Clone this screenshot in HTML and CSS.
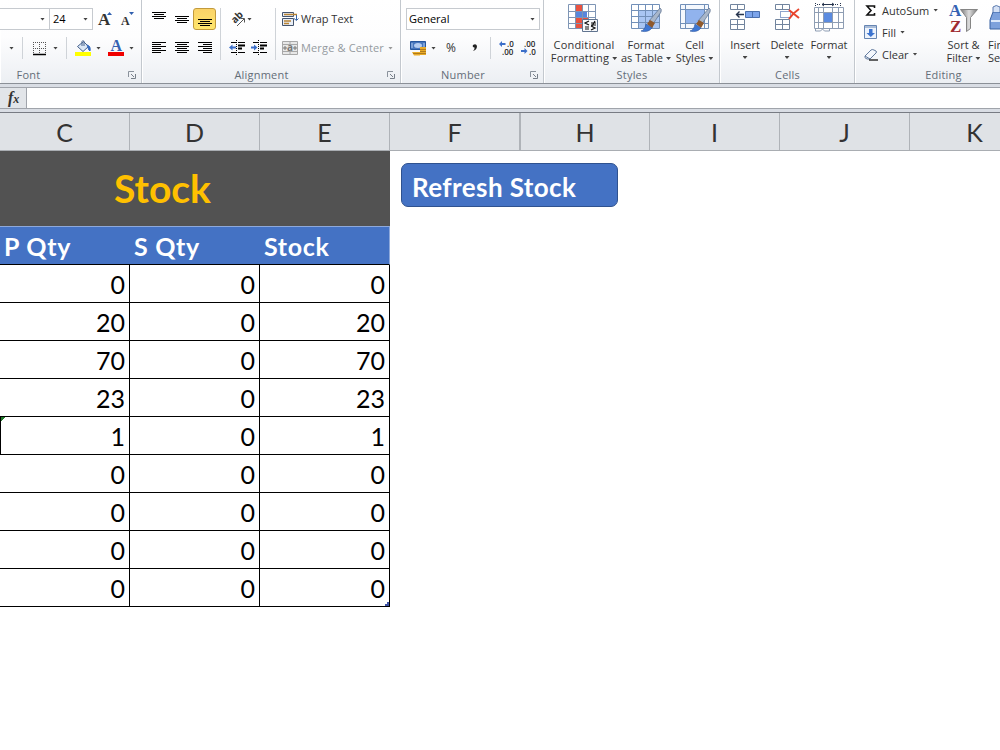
FILE: index.html
```html
<!DOCTYPE html>
<html lang="en">
<head>
  <meta charset="UTF-8">
  <meta name="viewport" content="width=device-width, initial-scale=1.0">
  <title>Stock</title>
  <link rel="stylesheet" href="styles.css">
</head>
<body>
  <!-- Ribbon -->
  <div class="ribbon">
    <div class="group font-group">
      <div class="row">
        <div class="combo font-name"><i class="caret"></i></div>
        <div class="combo font-size"><span>24</span><i class="caret"></i></div>
        <svg class="grow-font" width="16" height="16"><text x="0" y="14" class="serif" font-size="17">A</text><path d="M9 4l2.500-3 2.500 3z" fill="#2f5fae"/></svg>
        <svg class="shrink-font" width="14" height="16"><text x="0" y="14" class="serif" font-size="12">A</text><path d="M8 1h5l-2.500 3z" fill="#2f5fae"/></svg>
      </div>
      <div class="row font-bottom">
        <i class="caret"></i>
        <i class="sep"></i>
        <svg width="16" height="16"><path d="M1.500 2v11M7.500 2v11M13.500 2v11M1 2.500h13M1 8.500h13" stroke="#555" stroke-dasharray="1 1"/><path d="M1 14.500h13" stroke="#000" stroke-width="1.500"/></svg>
        <i class="caret"></i>
        <i class="sep"></i>
        <svg width="17" height="18"><path d="M2.500 7.500l6-5 5 5-5.500 5z" fill="#dce8f6" stroke="#44608c"/><path d="M7 7V2.500q1-2 2 0V7" fill="none" stroke="#44608c"/><path d="M12 6q4 1 3 6-2-1-2-4z" fill="#3267bd" stroke="#3267bd"/><path d="M0 13h16v4H0z" fill="#ff0"/></svg>
        <i class="caret"></i>
        <svg width="16" height="18"><text x="2.500" y="12" class="serif letter-blue" font-size="16">A</text><path d="M0 13h16v4H0z" fill="#f00000"/></svg>
        <i class="caret"></i>
      </div>
      <div class="label">Font</div>
      <svg class="launcher" width="8" height="8"><use href="#launch"/></svg>
    </div>

    <div class="group align-group">
      <div class="align-body">
        <div class="aligns">
          <svg width="14" height="14"><path d="M0 .5h14M2 2.500h10M0 4.500h14M2 6.500h10" class="ink"/></svg>
          <svg width="14" height="14"><path d="M0 4.500h14M2 6.500h10M0 8.500h14M2 10.500h10" class="ink"/></svg>
          <span class="pressed"><svg width="14" height="14"><path d="M0 7.500h14M2 9.500h10M0 11.500h14M2 13.500h10" class="ink"/></svg></span>
          <svg width="14" height="14"><path d="M0 1.500h14M0 3.500h9M0 5.500h14M0 7.500h9M0 9.500h14M0 11.500h9" class="ink"/></svg>
          <svg width="14" height="14"><path d="M0 1.500h14M2 3.500h10M0 5.500h14M2 7.500h10M0 9.500h14M2 11.500h10" class="ink"/></svg>
          <svg width="14" height="14"><path d="M0 1.500h14M5 3.500h9M0 5.500h14M5 7.500h9M0 9.500h14M5 11.500h9" class="ink"/></svg>
        </div>
        <i class="sep tall"></i>
        <div class="indents">
          <div class="row">
            <svg width="17" height="16"><text x="0" y="0" class="small-bold" transform="translate(6 13) rotate(-45)">ab</text><path d="M8 15l7-7M11.500 7.500h4v4" fill="none" stroke="#555"/></svg>
            <i class="caret"></i>
          </div>
          <div class="row">
            <svg width="17" height="16"><path d="M2 2.500h5M9 2.500h7M9 5.500h7M9 8.500h4M2 12.500h5M9 12.500h7" class="ink"/><path d="M9 5.500h7M9 8.500h4" class="ink thick"/><path d="M7.500 0v16" stroke="#000" stroke-dasharray="1 1"/><path d="M0 7.500l3.500-3v2H7v2H3.500v2z" fill="#3c6fc9"/></svg>
            <svg width="17" height="16"><path d="M2 2.500h5M9 2.500h7M9 5.500h7M9 8.500h4M2 12.500h5M9 12.500h7" class="ink"/><path d="M9 5.500h7M9 8.500h4" class="ink thick"/><path d="M7.500 0v16" stroke="#000" stroke-dasharray="1 1"/><path d="M6.500 7.500l-3.500-3v2H0v2h3v2z" fill="#3c6fc9"/></svg>
          </div>
        </div>
        <i class="sep tall"></i>
        <div class="wraps">
          <div class="row">
            <svg width="17" height="16"><path d="M.5 1.500h11v4H.5zM.5 7.500h11v7H.5z" fill="#e8edf5" stroke="#44546e"/><path d="M2 3.500h13M2 10h7M2 12.500h5" stroke="#b98435" stroke-width="1.400"/><path d="M14.500 4v5M12 7.500l2.500 2 2-2" fill="none" stroke="#3564a8"/></svg>
            <span class="wrap-text">Wrap Text</span>
          </div>
          <div class="row disabled">
            <svg width="16" height="16"><path d="M.5 1.500h15v13H.5zM0 4.500h16M0 11.500h16M8 1v3M8 12v3" fill="#e8e8e8" stroke="#a8a8a8"/><path d="M1 8h4M11 8h4M3 6v4M13 6v4" stroke="#777"/><text x="5" y="11" class="small-bold faded">a</text></svg>
            <span class="merge-text">Merge &amp; Center</span><i class="caret"></i>
          </div>
        </div>
      </div>
      <div class="label">Alignment</div>
      <svg class="launcher" width="8" height="8"><use href="#launch"/></svg>
    </div>

    <div class="group number-group">
      <div class="row">
        <div class="combo number-format"><span>General</span><i class="caret"></i></div>
      </div>
      <div class="row number-bottom">
        <svg width="17" height="17"><path d="M.5 1.500h15v8H.5z" fill="#4776bd" stroke="#26569d"/><ellipse cx="8" cy="5.500" rx="4" ry="2.500" fill="#b5cdf0"/><path d="M2 3v5M14 3v5" stroke="#b5cdf0"/><path d="M10 7h6v8h-6zM2 12h8v3.500H4z" fill="#e9ab28"/><path d="M10 9.500h6M10 11.500h6M10 13.500h6M3 13.500h7" stroke="#8a5a10" stroke-width=".6"/></svg>
        <i class="caret"></i>
        <span class="percent">%</span>
        <svg width="8" height="16"><path d="M1 5q3-2 4 1 0 4-4 5 2-2 1.500-3.500Q0 7 1 5z" fill="#222"/></svg>
        <i class="sep"></i>
        <svg width="17" height="16"><text x="8" y="6.500" class="decimal">.0</text><text x="3" y="14.500" class="decimal">.00</text><path d="M0 4l3-3v2h3.500v2H3v2z" fill="#3c6fc9"/></svg>
        <svg width="17" height="16"><text x="3" y="6.500" class="decimal">.00</text><text x="8" y="14.500" class="decimal">.0</text><path d="M6.500 11l-3-3v2H0v2h3.500v2z" fill="#3c6fc9"/></svg>
      </div>
      <div class="label">Number</div>
      <svg class="launcher" width="8" height="8"><use href="#launch"/></svg>
    </div>

    <div class="group styles-group">
      <div class="big-row">
        <div class="big conditional">
          <svg width="32" height="32"><path d="M1.500 2.500h27v23h-27z" fill="#fff"/><path d="M8 2h7v6H8zM8 14h13v6H8zM8 20h7v6H8z" fill="#e9523f"/><path d="M8 8h12v6H8z" fill="#5886dc"/><path d="M1.500 1.500h27v24h-27zM1 8.500h28M1 14.500h28M1 20.500h28M8.500 1v25M15.500 1v25M21.500 1v25" fill="none" stroke="#7e95b5"/><path d="M15.500 16.500h15v12h-15z" fill="#f7f9fc" stroke="#60738f"/><path d="M22 18l-4 2 4 2M18 24h4M18 26h4M24 20h5M24 22h5M28 18l-3 5M24 23l4 2-4 2" fill="none" stroke="#111" stroke-width="1.200"/></svg>
          <span>Conditional</span><span>Formatting<i class="caret"></i></span>
        </div>
        <div class="big as-table">
          <svg width="32" height="32"><path d="M1.500 1.500h28v24h-28z" fill="#fff"/><path d="M9 8h20v17H9z" fill="#a9c6f3"/><path d="M1.500 1.500h28v24h-28zM1 7.500h29M1 13.500h29M1 19.500h29M8.500 1v25M15.500 1v25M22.500 1v25" fill="none" stroke="#7290b9"/><use href="#brush"/></svg>
          <span>Format</span><span>as Table<i class="caret"></i></span>
        </div>
        <div class="big cell-styles">
          <svg width="32" height="32"><path d="M1.500 1.500h28v24h-28z" fill="#f5f8fd" stroke="#7290b9"/><path d="M6.500 6.500h19v14h-19z" fill="#91b3ed" stroke="#5d82bd"/><path d="M6.500 1v25M25.500 1v25M1 6.500h29M1 20.500h29" stroke="#7290b9"/><use href="#brush"/></svg>
          <span>Cell</span><span>Styles<i class="caret"></i></span>
        </div>
      </div>
      <div class="label">Styles</div>
    </div>

    <div class="group cells-group">
      <div class="big-row">
        <div class="big">
          <svg width="32" height="32"><path d="M1.500 1.500h14v5h-14zM8.500 1v6M1.500 16.500h14v10h-14zM8.500 16v11M1 21.500h15" fill="#fff" stroke="#71849e"/><path d="M16.500 8.500h14v6h-14zM23.500 8v7" fill="#7ca4eb" stroke="#4a6fad"/><path d="M8 11.500h7M10.500 8.500l-3 3 3 3" fill="none" stroke="#26344d" stroke-width="1.400"/></svg>
          <span>Insert</span><i class="caret"></i>
        </div>
        <div class="big">
          <svg width="32" height="32"><path d="M4.500 1.500h14v5h-14zM11.500 1v6M4.500 16.500h14v10h-14zM11.500 16v11M4 21.500h15" fill="#fff" stroke="#71849e"/><path d="M9.500 8.500h10v6h-10z" fill="#fff" stroke="#234b9b" stroke-dasharray="1 1"/><path d="M18 7l10 8M28 6q-6 4-10 10" fill="none" stroke="#e8452e" stroke-width="2"/></svg>
          <span>Delete</span><i class="caret"></i>
        </div>
        <div class="big">
          <svg width="32" height="32"><path d="M2.500 0v4M27.500 0v4M4 1.500h4M22 1.500h4" stroke="#26344d" stroke-dasharray="1 1"/><path d="M9 1.500h12M11 0l-2 1.500L11 3M19 0l2 1.500L19 3" fill="none" stroke="#26344d"/><path d="M1.500 5.500h28v21h-28z" fill="#fff"/><path d="M10.500 9.500h9v10h-9z" fill="#5b8be0"/><path d="M1.500 4.500h29v21h-29zM1 9.500h30M1 19.500h30M5.500 4v22M10.500 4v22M19.500 4v22M25.500 4v22M2.500 26v2h5l2-2 2 2h5v-2" fill="none" stroke="#8e9db3"/></svg>
          <span>Format</span><i class="caret"></i>
        </div>
      </div>
      <div class="label">Cells</div>
    </div>

    <div class="group editing-group">
      <div class="editing-body">
        <div class="edit-list">
          <div><svg width="14" height="16"><path d="M10.500 6V4H3l4 4.500L3 13h7.500v-2" fill="none" stroke="#111" stroke-width="1.600"/></svg><span>AutoSum</span><i class="caret"></i></div>
          <div><svg width="14" height="16"><path d="M.5 1.500h12v13H.5z" fill="#edf3fc" stroke="#6685b2"/><path d="M1 3h11" stroke="#6685b2"/><path d="M5 5h3.500v4h2.500L6.800 13 2.500 9H5z" fill="#3c74d0"/></svg><span>Fill</span><i class="caret"></i></div>
          <div><svg width="14" height="16"><path d="M1 10l6-6q1-1 3 0l2 1q1 1 0 2l-6 6H3q-3-1-2-3z" fill="#f4f7fc" stroke="#637b9e"/><path d="M1 10l5 3" stroke="#637b9e"/><path d="M5 14h9" stroke="#111" stroke-width="1.300"/></svg><span>Clear</span><i class="caret"></i></div>
        </div>
        <div class="big sort">
          <svg width="32" height="32"><path d="M12.500 6.500h17l-7 8v11l-4 3v-14z" fill="url(#steel)" stroke="#858585"/><text x="1" y="13" class="serif letter-blue" font-size="17">A</text><text x="2" y="29" class="serif letter-red" font-size="17">Z</text></svg>
          <span>Sort &amp;</span><span>Filter<i class="caret"></i></span>
        </div>
        <div class="big find">
          <svg width="32" height="32"><path d="M2 17l3-8h7l3 8v9H2z" fill="#7da1dc" stroke="#3b62a2"/><path d="M5 9V4q3-3 7 0v5" fill="#d6e2f6" stroke="#5c7bae"/><path d="M3 18h12" stroke="#dce8fa" stroke-width="2"/></svg>
          <span>Find &amp;</span><span>Select</span>
        </div>
      </div>
      <div class="label">Editing</div>
    </div>
  </div>

  <!-- Formula bar -->
  <div class="formula-bar">
    <div class="fx"><i>f</i><i class="x">x</i></div>
    <div class="formula-input"></div>
  </div>

  <!-- Sheet -->
  <div class="columns">
    <div>C</div><div>D</div><div>E</div><div class="before-hidden">F</div><div>H</div><div>I</div><div>J</div><div>K</div>
  </div>
  <div class="sheet">
    <table class="stock">
      <thead>
        <tr class="title"><th colspan="3">Stock</th></tr>
        <tr class="heads"><th>P Qty</th><th>S Qty</th><th>Stock</th></tr>
      </thead>
      <tbody>
        <tr><td>0</td><td>0</td><td>0</td></tr>
        <tr><td>20</td><td>0</td><td>20</td></tr>
        <tr><td>70</td><td>0</td><td>70</td></tr>
        <tr><td>23</td><td>0</td><td>23</td></tr>
        <tr><td class="selected-edge">1</td><td>0</td><td>1</td></tr>
        <tr><td>0</td><td>0</td><td>0</td></tr>
        <tr><td>0</td><td>0</td><td>0</td></tr>
        <tr><td>0</td><td>0</td><td>0</td></tr>
        <tr><td>0</td><td>0</td><td class="table-end">0</td></tr>
      </tbody>
    </table>
    <button type="button" class="refresh">Refresh Stock</button>
  </div>

  <!-- Shared shapes -->
  <svg class="defs" width="0" height="0">
    <defs>
      <linearGradient id="steel"><stop offset="0" stop-color="#777"/><stop offset=".5" stop-color="#ddd"/><stop offset="1" stop-color="#777"/></linearGradient>
      <g id="launch"><path d="M.5 6V.5H6" fill="none" stroke="#8a929c"/><path d="M3 3l3 3M7.500 3v4.500H3" fill="none" stroke="#777f89"/></g>
      <g id="brush"><path d="M30 5q2 1 1 4l-8 12-4-3z" fill="#a8b6ca" stroke="#5a6e8c" stroke-width=".7"/><path d="M20 17l5 3-3 5-5-4z" fill="#8f5a2e"/><path d="M16 21l6 4q-4 5-11 3 4-1 5-7z" fill="#3f77d2" stroke="#2b559f" stroke-width=".6"/></g>
    </defs>
  </svg>
</body>
</html>
```
FILE: styles.css
```css
:root {
  --ui-font: "Open Sans", "Noto Sans", sans-serif;
  --cell-font: Lato, sans-serif;
  --blue: #4472c4;
}

* {
  box-sizing: border-box;
}

body {
  margin: 0;
  width: 1000px;
  height: 750px;
  overflow: hidden;
  background: #fff;
  font-family: var(--ui-font);
  font-size: 11px;
  color: #333;
}

svg {
  display: block;
  flex: none;
  overflow: visible;
}

.defs {
  position: absolute;
}

/* ===== RIBBON ===== */
.ribbon {
  display: flex;
  height: 84px;
  overflow: hidden;
  background: linear-gradient(#fff 0, #fdfdfe 45%, #eceff3 100%);
  border-bottom: 1px solid #8b9097;
}

.group {
  position: relative;
  flex: none;
  padding-top: 8px;
  border-right: 1px solid #c3c8ce;
  box-shadow: inset 1px 0 #fff;
}

.font-group { width: 142px; }
.align-group { width: 259px; }
.number-group { width: 143px; }
.styles-group { width: 176px; }
.cells-group { width: 135px; }
.editing-group { width: 176px; border: none; }

.row {
  display: flex;
  align-items: center;
  height: 22px;
}

.row + .row {
  margin-top: 7px;
}

.row span {
  padding-bottom: 2px;
}

.label {
  position: absolute;
  bottom: 1px;
  left: 1px;
  right: 0;
  line-height: 15px;
  text-align: center;
  color: #646d78;
  letter-spacing: 0.2px;
}

.font-group .label { right: 85px; }
.align-group .label { right: 20px; }
.number-group .label { right: 19px; }

.launcher {
  position: absolute;
  right: 5px;
  bottom: 4px;
}

.caret {
  flex: none;
  display: inline-block;
  width: 5px;
  height: 3px;
  background: #444;
  clip-path: polygon(0 0, 100% 0, 50% 100%);
}

.sep {
  width: 1px;
  height: 22px;
  background: #cfd3d8;
}

.sep.tall {
  height: 52px;
}

.combo {
  display: flex;
  align-items: center;
  justify-content: space-between;
  height: 22px;
  padding: 0 4px 0 2px;
  border: 1px solid #c6cacf;
  background: #fff;
  color: #000;
}

.font-name {
  width: 51px;
  margin-left: -1px;
  justify-content: flex-end;
}

.font-size {
  width: 43px;
  border-left: none;
  padding-left: 3px;
}

.grow-font { margin-left: 5px; }
.shrink-font { margin-left: 7px; }

.font-bottom {
  display: grid;
  grid-template-columns: 13px 10px 21px 13px 9px 21px 12px 21px 8px;
  padding-left: 9px;
}

.serif {
  font-family: "Liberation Serif", serif;
  font-weight: bold;
  fill: #333;
}

.letter-blue { fill: #3562b3; }
.letter-red { fill: #a02c32; }

.small-bold {
  font-size: 10px;
  font-weight: bold;
  fill: #333;
}

.faded { fill: #777; }

.ink {
  stroke: #000;
}

.ink.thick {
  stroke-width: 2;
}

.align-body {
  display: flex;
  padding-left: 5px;
}

.aligns {
  display: grid;
  grid-template-columns: repeat(3, 23px);
  grid-template-rows: 22px 22px;
  row-gap: 7px;
  place-items: center;
  margin-right: 4px;
}

.pressed {
  display: grid;
  place-items: center;
  width: 23px;
  height: 22px;
  border: 1px solid #c29a3c;
  border-radius: 3px;
  background: linear-gradient(#fbd368, #ffe66e);
}

.indents {
  width: 54px;
  padding-left: 8px;
}

.indents svg { margin-right: 5px; }
.indents .caret { margin-left: -4px; }

.wraps {
  padding-left: 6px;
}

.wraps span {
  margin-left: 2px;
  white-space: nowrap;
}

.wraps .merge-text {
  margin-left: 3px;
  letter-spacing: 0.15px;
}

.disabled {
  color: #959a9f;
}

.disabled .caret {
  margin-left: 4px;
  background: #999;
}

.number-format {
  width: 134px;
  margin-left: 5px;
}

.number-bottom {
  display: grid;
  grid-template-columns: 21px 15px 26px 18px 9px 22px 17px;
  padding-left: 9px;
}

.percent {
  font-size: 12px;
}

.decimal {
  font-size: 8px;
  font-weight: 600;
  fill: #222;
}

.big-row {
  display: flex;
  margin-top: -5px;
}

.big {
  display: flex;
  flex-direction: column;
  align-items: center;
  width: 42px;
  line-height: 13px;
  white-space: nowrap;
}

.big svg { margin-bottom: 3px; }
.big span .caret { margin: 0 0 2px 3px; }
.big > .caret { margin-top: 5px; }

.conditional { width: 68px; margin-left: 6px; letter-spacing: 0.2px; }
.conditional svg { margin-left: -2px; }
.as-table { width: 56px; }
.cell-styles { width: 41px; }
.cells-group .big-row { padding-left: 4px; }

.editing-body {
  display: flex;
  margin-top: -5px;
}

.edit-list {
  width: 78px;
  margin-top: -1px;
  padding-left: 9px;
}

.edit-list div {
  display: flex;
  align-items: center;
  height: 16px;
  margin-bottom: 6px;
}

.edit-list span {
  margin: 0 4px;
}

.sort { width: 61px; }
.find { width: 40px; align-items: flex-start; margin-left: -6px; }

/* ===== FORMULA BAR ===== */
.formula-bar {
  display: flex;
  height: 29px;
  padding: 3px 0;
  background: #d9dde4;
  border-bottom: 1px solid #777b83;
}

.fx {
  width: 27px;
  padding-left: 8px;
  border: 1px solid #a0a4ab;
  border-left: none;
  background: #e2e5e9;
  font: bold 16px/19px "Liberation Serif", serif;
}

.fx .x {
  font-size: 12px;
}

.formula-input {
  flex: 1;
  border: solid #a0a4ab;
  border-width: 1px 0;
  background: #fff;
}

/* ===== SHEET ===== */
.columns {
  display: flex;
  width: 1040px;
  height: 38px;
  background: #dfe2e6;
  border-bottom: 1px solid #a9adb2;
  font: 25px/38px var(--cell-font);
}

.columns div {
  width: 130px;
  border-right: 1px solid #afb3b8;
  text-align: center;
}

.columns .before-hidden {
  border-right-width: 2px;
  width: 131px;
}

.columns .before-hidden + div {
  width: 129px;
}

.sheet {
  display: flex;
  align-items: flex-start;
  font-family: var(--cell-font);
}

.stock {
  width: 390px;
  table-layout: fixed;
  border-collapse: separate;
  border-spacing: 0;
  font-size: 25px;
  color: #000;
}

.stock th,
.stock td {
  height: 38px;
  padding: 1px 4px 0;
  line-height: 30px;
}

.stock .title th {
  height: 75px;
  background: #525252;
  color: #ffc000;
  font-size: 39px;
  padding: 0 65px 1px 0;
  line-height: 40px;
}

.heads th {
  border-top: 1px solid #8ea9db;
  border-bottom: 1px solid #000;
  background: var(--blue);
  color: #fff;
  text-align: left;
  letter-spacing: 0.7px;
}

.heads th:last-child {
  border-right: 1px solid #8ea9db;
}

.stock .heads th {
  height: 39px;
}

.stock td {
  border-right: 1px solid #000;
  border-bottom: 1px solid #000;
  text-align: right;
}

.stock .selected-edge {
  border-left: 1px solid #000;
  background: linear-gradient(135deg, #217b2b 3px, transparent 3px);
}

.table-end {
  background: linear-gradient(#3b50a2, #3b50a2) right bottom / 4px 2px no-repeat,
    linear-gradient(#3b50a2, #3b50a2) right bottom / 2px 4px no-repeat;
}

.refresh {
  width: 217px;
  height: 44px;
  margin: 12px 0 0 11px;
  padding: 3px 0 0 10px;
  border: 1px solid #2f528f;
  border-radius: 7px;
  background: var(--blue);
  color: #fff;
  font: bold 26px/30px var(--cell-font);
  letter-spacing: 0.4px;
  text-align: left;
}
```
